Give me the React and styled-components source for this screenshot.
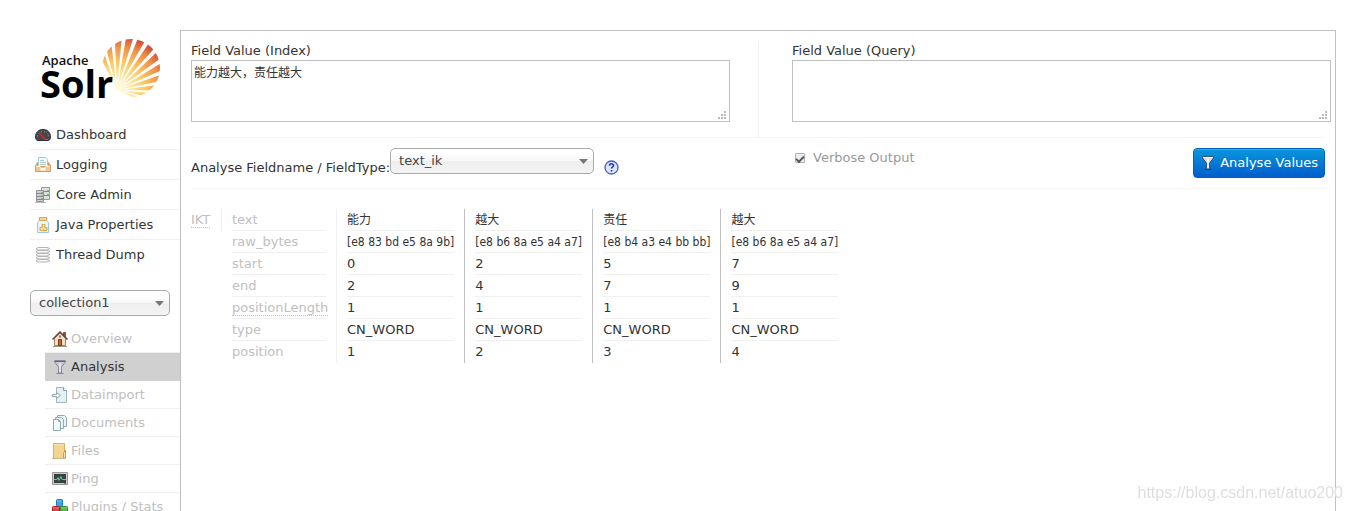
import React from 'react'
import styled, { createGlobalStyle } from 'styled-components'

const GlobalStyle = createGlobalStyle`
    * {
        box-sizing: border-box;
    }
    body {
        margin: 0;
        background: #fff;
        color: #333;
        font: 13px/20px Verdana, "DejaVu Sans", "Noto Sans CJK SC", sans-serif;
    }
    button, select, textarea, input {
        font: inherit;
        color: inherit;
        margin: 0;
    }
    a {
        color: inherit;
        text-decoration: none;
    }
`

const Page = styled.div`
    display: flex;
    height: 100vh;
    padding: 30px 16px 0 30px;
    overflow: hidden;
`
const Sidebar = styled.nav`
    flex: 0 0 150px;
`
const LogoLink = styled.a`
    display: block;
    height: 90px;
    padding-left: 10px;
    svg {
        display: block;
    }
`
const MenuList = styled.ul`
    list-style: none;
    margin: 0;
    padding: 0;
`
const MenuItem = styled.li`
    height: 30px;
    border-bottom: 1px solid ${props => props.$last ? 'transparent' : '#f0f0f0'};
    a {
        display: flex;
        align-items: center;
        gap: 5px;
        height: 100%;
        padding-left: 5px;
    }
`
const CoreMenu = styled(MenuList)`
    margin: 9px 0 0 15px;
`
const CoreItem = styled.li`
    height: 28px;
    border-bottom: 1px solid ${props => props.$active ? '#d0d0d0' : '#f0f0f0'};
    background: ${props => props.$active ? '#d0d0d0' : 'transparent'};
    color: ${props => props.$active ? '#333' : '#c0c0c0'};
    a {
        display: flex;
        align-items: center;
        gap: 3px;
        height: 100%;
        padding-left: 7px;
    }
`
const SelectBox = styled.div`
    position: relative;
    width: ${props => props.$width}px;
    select {
        appearance: none;
        display: block;
        width: 100%;
        height: 26px;
        padding: 0 24px 0 8px;
        border: 1px solid #aaa;
        border-radius: 5px;
        background: linear-gradient(#fff 20%, #f6f6f6 50%, #eee 52%, #f4f4f4 100%);
        color: #444;
    }
    svg {
        position: absolute;
        right: 6px;
        top: 11px;
        pointer-events: none;
    }
`
const CoreSelect = styled.div`
    margin-top: 20px;
`
const Content = styled.main`
    flex: 1;
    min-width: 0;
    padding: 10px;
    border: 1px solid #c0c0c0;
    border-bottom: 0;
`
const Fields = styled.div`
    display: grid;
    grid-template-columns: 1fr 1fr;
    height: 97px;
    border-bottom: 1px solid #f6f6f6;
`
const IndexField = styled.div`
    padding-right: 28px;
`
const QueryField = styled.div`
    margin-right: -6px;
    padding-left: 33px;
    border-left: 1px solid #f0f0f0;
`
const FieldLabel = styled.label`
    display: block;
    height: 19px;
`
const TextBox = styled.div`
    position: relative;
    textarea {
        display: block;
        width: 100%;
        height: 62px;
        padding: 2px;
        border: 1px solid #c0c0c0;
        border-radius: 0;
        resize: none;
        outline: none;
        font-size: 12px;
    }
    svg {
        position: absolute;
        right: 4px;
        bottom: 3px;
    }
`
const Controls = styled.div`
    display: grid;
    grid-template-columns: 1fr 1fr;
    height: 51px;
    padding-top: 10px;
    border-bottom: 1px solid #f6f6f6;
`
const TypeField = styled.div`
    display: flex;
    align-items: flex-start;
    > label {
        padding-top: 10px;
    }
    > a {
        display: block;
        margin: 12px 0 0 10px;
    }
    svg {
        display: block;
    }
`
const Actions = styled.div`
    display: flex;
    align-items: flex-start;
    justify-content: space-between;
    padding-left: 37px;
`
const Verbose = styled.label`
    display: flex;
    align-items: center;
    gap: 8px;
    color: #999;
    input {
        appearance: none;
        display: grid;
        width: 10px;
        height: 10px;
        border: 1px solid #b0b0b0;
        border-radius: 1px;
        background: #eee;
        place-items: center;
    }
    input:checked::before {
        content: "";
        width: 6px;
        height: 3px;
        border: solid #555;
        border-width: 0 0 2px 2px;
        transform: rotate(-45deg);
    }
`
const AnalyseButton = styled.button`
    display: flex;
    align-items: center;
    gap: 4px;
    height: 30px;
    padding: 0 6px;
    border: 1px solid #0062b8;
    border-radius: 4px;
    background: linear-gradient(#0a97dd, #005dcc);
    box-shadow: inset 0 1px 0 #39a9e0;
    color: #fff;
    white-space: nowrap;
`
const ResultTable = styled.table`
    margin-top: 20px;
    border-collapse: separate;
    border-spacing: 0;
    th, td {
        padding: 0 10px;
        font-weight: normal;
        text-align: left;
        vertical-align: top;
        white-space: nowrap;
    }
    th {
        color: #c0c0c0;
    }
    abbr {
        text-decoration: none;
        border-bottom: 1px dotted #c0c0c0;
    }
    th.analyzer {
        padding: 0;
    }
    th.analyzer div {
        width: 31px;
        height: 21px;
        border-right: 1px solid #f0f0f0;
        line-height: 22px;
    }
`
const TokenCell = styled.td`
    border-left: 1px solid ${props => props.$first ? '#f0f0f0' : '#c0c0c0'};
`
const CellLine = styled.div`
    height: 22px;
    line-height: 22px;
    border-bottom: 1px solid ${props => props.$last ? 'transparent' : '#f0f0f0'};
    ${props => props.$value ? 'min-width: 107px;' : 'width: 94px;'}
    ${props => props.$text && 'font-size: 12px;'}
    ${props => props.$bytes && 'font-family: "DejaVu Sans Condensed", "DejaVu Sans"; font-size: 12px;'}
`
const Watermark = styled.div`
    position: fixed;
    right: 9px;
    bottom: 8px;
    font: 16px/20px "Liberation Sans", sans-serif;
    color: #dedede;
    pointer-events: none;
`

const rays = Array.from({ length: 12 }, (_, i) => {
  const point = deg => {
    const a = deg * Math.PI / 180
    return `${(77 + 75 * Math.cos(a)).toFixed(2)},${(60 - 75 * Math.sin(a)).toFixed(2)}`
  }
  const from = -25 + i * 12.2
  return `77,60 ${point(from)} ${point(from + 7.6)}`
})

const Logo = () => (
  <svg width="125" height="80" viewBox="0 0 125 80" role="img" aria-label="Apache Solr">
    <defs>
      <radialGradient id="sun" gradientUnits="userSpaceOnUse" cx="77" cy="60" r="62">
        <stop offset="0.15" stopColor="#fff3bd" />
        <stop offset="0.45" stopColor="#fbc964" />
        <stop offset="0.7" stopColor="#ef9048" />
        <stop offset="0.95" stopColor="#c9302c" />
      </radialGradient>
      <clipPath id="disc"><circle cx="91" cy="38" r="29" /></clipPath>
    </defs>
    <g clipPath="url(#disc)" fill="url(#sun)">
      {rays.map(points => <polygon key={points} points={points} />)}
    </g>
    <text x="2" y="35" fontFamily="Open Sans" fontSize="13" fontWeight="600" fill="#111">Apache</text>
    <text x="0" y="68" fontFamily="Open Sans" fontSize="38" fontWeight="700" fill="#000">Solr</text>
  </svg>
)

const Icon = ({ children }) => (
  <svg width="16" height="16" viewBox="0 0 16 16" aria-hidden="true">{children}</svg>
)

const Funnel = ({ light }) => (
  <Icon>
    <path d="M2.500 1.500h11v1.500L9.500 8v6h-3V8l-4-5z" fill={light ? '#ddd' : '#c8c8d4'} stroke={light ? '#35557d' : '#88889a'} />
    <path d="M3 2.500h10" stroke={light ? '#fff' : '#66667a'} />
    <path d="M8 4v9" stroke="#fff" />
    <path d="M4.500 14.500h7" stroke={light ? '#1c4778' : '#888'} />
  </Icon>
)

const icons = {
  dashboard: (
    <Icon>
      <path d="M.5 10C.5 5 4 2.500 8 2.500s7.500 2.500 7.500 7.500c0 1.500-1 3.500-2 3.500h-11C1.500 13.500.5 11.500.5 10z" fill="#46464e" stroke="#303036" />
      <path d="M2.500 9.500C3 6 5 4.500 8 4.500s5 1.500 5.500 5" fill="none" stroke="#999" strokeDasharray="1 2" />
      <path d="M4 6l6 6" stroke="#e22" strokeWidth="1.300" />
      <path d="M10 12.500h3" stroke="#777" />
    </Icon>
  ),
  logging: (
    <Icon>
      <path d="M3.500 8.500v-8h7l2 2v6" fill="#f2fafc" stroke="#a5c6d0" />
      <path d="M5 3.500h4M5 5.500h6M5 7.500h6" stroke="#a9cbc4" />
      <path d="M.5 8.500l2-3v4h11v-4l2 3v6H.5z" fill="#f5c793" stroke="#d29a5c" />
      <path d="M1 9.500h4l1 2h4l1-2h4" fill="none" stroke="#fff0d8" />
      <path d="M5.500 12.500h5" stroke="#fff" strokeWidth="2" />
    </Icon>
  ),
  core: (
    <Icon>
      <path d="M6.500.5h8v12h-8z" fill="#dcdfdc" stroke="#9a9aa2" />
      <path d="M1.500 3.500h7v11h-7z" fill="#d0d0d4" stroke="#9090a0" />
      <path d="M2 6.500h6M2 9.500h6M2 12.500h6M9 4.500h5M9 8.500h5" stroke="#888" />
      <path d="M6 5.500h2M6 8.500h2M6 11.500h2M12 3.500h2M12 7.500h2" stroke="#86b486" />
      <path d="M0 15.500h11" stroke="#bbb" />
    </Icon>
  ),
  java: (
    <Icon>
      <path d="M4.500 3.500l-2 2v10h11v-10l-2-2z" fill="#e6f3fb" stroke="#a3c6da" />
      <path d="M4.500.5h7v3h-7z" fill="#f5d98b" stroke="#cfa95c" />
      <path d="M5 13.500V10.500h2V7.500h3v3h2v3z" fill="#f0cf80" stroke="#d9ab55" />
      <path d="M7 11v2M10 11v2M8.500 8v1" stroke="#fff0af" />
    </Icon>
  ),
  thread: (
    <Icon>
      {[1, 4, 7, 10, 13].map(y => (
        <path key={y} d={`M3 ${y - .5}h9l3 1-3 1.500H3L1 ${y + .8}z`} fill="#fafafa" stroke="#b4b4b4" />
      ))}
    </Icon>
  ),
  overview: (
    <Icon>
      <path d="M11.500 1.500h2v4h-2z" fill="#a45f40" stroke="#78503c" />
      <path d="M2.500 7v7.500h11V7L8 2z" fill="#f2ddc5" stroke="#a58265" />
      <path d="M.5 8.500L8 1l7.500 7.500" fill="none" stroke="#68453a" strokeWidth="1.500" />
      <path d="M6.500 8.500h3v6h-3z" fill="#b9682f" stroke="#793d1e" />
      <path d="M7 5.500h2" stroke="#956c62" strokeWidth="2" />
      <path d="M1 15.500h14" stroke="#9b9b82" />
    </Icon>
  ),
  analysis: <Funnel />,
  dataimport: (
    <Icon>
      <path d="M4.500.5h7l3 3v12h-10z" fill="#e6f0f1" stroke="#9db7ba" />
      <path d="M11.500.5v3h3" fill="#fff" stroke="#82a4a7" />
      <path d="M.5 7.500h4v-2l4 3-4 3v-2h-4z" fill="#fff" stroke="#8aa8ab" />
    </Icon>
  ),
  documents: (
    <Icon>
      <path d="M5.500.5h7l2 2v9h-9z" fill="#edf6f7" stroke="#8dabae" />
      <path d="M3.500 2.500h6l2 2v9h-8z" fill="#edf6f7" stroke="#8dabae" />
      <path d="M1.500 4.500h5l2 2v9h-7z" fill="#f4fafa" stroke="#8dabae" />
      <path d="M6.500 4.500v2h2" fill="none" stroke="#8dabae" />
    </Icon>
  ),
  files: (
    <Icon>
      <path d="M1.500.5h11v15h-11z" fill="#f3d58f" stroke="#d9b063" />
      <path d="M2.500 1.500h9" stroke="#fae5b0" />
      <path d="M11.500 15V10l2-3v8z" fill="#f8e4a9" stroke="#c4a04f" />
      <path d="M12 9l1-1" stroke="#69a9d8" />
      <path d="M0 15.500h14" stroke="#c9b78e" />
    </Icon>
  ),
  ping: (
    <Icon>
      <path d="M.5 1.500h15v12H.5z" fill="#ccc" stroke="#999" />
      <path d="M2 3h12v9H2z" fill="#37413f" />
      <path d="M2 8.500h3l1-2 1 3 2-4 1 3h4" fill="none" stroke="#45d5a1" />
      <path d="M12 12.500h2" stroke="#777" />
    </Icon>
  ),
  plugins: (
    <Icon>
      <rect x="4.500" y=".5" width="6" height="7" rx="1" fill="#3ba3df" stroke="#1d7ab8" />
      <rect x=".5" y="7.500" width="7" height="7" rx="1" fill="#e83b43" stroke="#b71823" />
      <rect x="8.500" y="7.500" width="7" height="7" rx="1" fill="#55b746" stroke="#2d8a28" />
      <path d="M5 2h5M1 9h6M9 9h6" stroke="#fff" opacity=".35" />
    </Icon>
  )
}

const menu = [
  ['dashboard', 'Dashboard'],
  ['logging', 'Logging'],
  ['core', 'Core Admin'],
  ['java', 'Java Properties'],
  ['thread', 'Thread Dump']
]

const coreMenu = [
  ['overview', 'Overview'],
  ['analysis', 'Analysis'],
  ['dataimport', 'Dataimport'],
  ['documents', 'Documents'],
  ['files', 'Files'],
  ['ping', 'Ping'],
  ['plugins', 'Plugins / Stats']
]

const tokens = [
  { text: '能力', raw_bytes: '[e8 83 bd e5 8a 9b]', start: 0, end: 2, positionLength: 1, type: 'CN_WORD', position: 1 },
  { text: '越大', raw_bytes: '[e8 b6 8a e5 a4 a7]', start: 2, end: 4, positionLength: 1, type: 'CN_WORD', position: 2 },
  { text: '责任', raw_bytes: '[e8 b4 a3 e4 bb bb]', start: 5, end: 7, positionLength: 1, type: 'CN_WORD', position: 3 },
  { text: '越大', raw_bytes: '[e8 b6 8a e5 a4 a7]', start: 7, end: 9, positionLength: 1, type: 'CN_WORD', position: 4 }
]

const attributes = ['text', 'raw_bytes', 'start', 'end', 'positionLength', 'type', 'position']

const Select = ({ id, value, width, label }) => (
  <SelectBox $width={width}>
    <select id={id} aria-label={label} defaultValue={value}>
      <option>{value}</option>
    </select>
    <svg width="9" height="5" viewBox="0 0 9 5" aria-hidden="true">
      <path d="M0 0h9L4.500 5z" fill="#777" />
    </svg>
  </SelectBox>
)

const TextArea = ({ id, value }) => (
  <TextBox>
    <textarea id={id} defaultValue={value} spellCheck="false" />
    <svg width="8" height="8" viewBox="0 0 8 8" fill="#bbb" aria-hidden="true">
      <path d="M6 0h2v2H6zM3 3h2v2H3zM6 3h2v2H6zM0 6h2v2H0zM3 6h2v2H3zM6 6h2v2H6z" />
    </svg>
  </TextBox>
)

const Result = () => (
  <ResultTable>
    <tbody>
      {attributes.map((name, row) => {
        const last = row === attributes.length - 1
        return (
          <tr key={name}>
            {row === 0 && (
              <th className="analyzer" rowSpan={attributes.length}>
                <div><abbr title="IKTokenizer">IKT</abbr></div>
              </th>
            )}
            <th scope="row">
              <CellLine $last={last}>
                {name === 'positionLength' ? <abbr>{name}</abbr> : name}
              </CellLine>
            </th>
            {tokens.map((token, i) => (
              <TokenCell key={i} $first={i === 0}>
                <CellLine $value $last={last} $text={name === 'text'} $bytes={name === 'raw_bytes'}>
                  {token[name]}
                </CellLine>
              </TokenCell>
            ))}
          </tr>
        )
      })}
    </tbody>
  </ResultTable>
)

const App = () => {
  return (
    <>
      <GlobalStyle />
      <Page>
        <Sidebar>
          <LogoLink href="#/"><Logo /></LogoLink>
          <MenuList>
            {menu.map(([icon, name], i) => (
              <MenuItem key={name} $last={i === menu.length - 1}>
                <a href={`#/${icon}`}>{icons[icon]}{name}</a>
              </MenuItem>
            ))}
          </MenuList>
          <CoreSelect>
            <Select label="Core Selector" value="collection1" width={140} />
          </CoreSelect>
          <CoreMenu>
            {coreMenu.map(([icon, name]) => (
              <CoreItem key={name} $active={icon === 'analysis'}>
                <a href={`#/collection1/${icon}`}>{icons[icon]}{name}</a>
              </CoreItem>
            ))}
          </CoreMenu>
        </Sidebar>
        <Content>
          <Fields>
            <IndexField>
              <FieldLabel htmlFor="index-value">Field Value (Index)</FieldLabel>
              <TextArea id="index-value" value="能力越大，责任越大" />
            </IndexField>
            <QueryField>
              <FieldLabel htmlFor="query-value">Field Value (Query)</FieldLabel>
              <TextArea id="query-value" value="" />
            </QueryField>
          </Fields>
          <Controls>
            <TypeField>
              <label htmlFor="field-type">Analyse Fieldname / FieldType:</label>
              <Select id="field-type" value="text_ik" width={204} />
              <a href="#/schema" aria-label="Schema Browser">
                <svg width="15" height="15" viewBox="0 0 15 15">
                  <circle cx="7.500" cy="7.500" r="6.500" fill="#dde4f8" stroke="#3d5fd0" strokeWidth="1.300" />
                  <path d="M5.500 5.800c0-2.600 4-2.600 4-.2 0 1.500-2 1.400-2 3M7.500 10v1.600" fill="none" stroke="#2340b0" strokeWidth="1.600" />
                </svg>
              </a>
            </TypeField>
            <Actions>
              <Verbose>
                <input type="checkbox" defaultChecked />
                Verbose Output
              </Verbose>
              <AnalyseButton type="button"><Funnel light />Analyse Values</AnalyseButton>
            </Actions>
          </Controls>
          <Result />
        </Content>
      </Page>
      <Watermark>https://blog.csdn.net/atuo200</Watermark>
    </>
  )
}

export default App
